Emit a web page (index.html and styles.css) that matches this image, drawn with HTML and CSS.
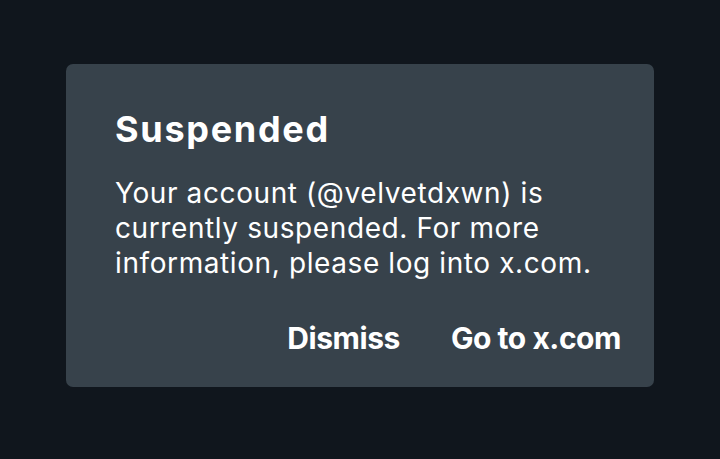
FILE: index.html
```html
<!DOCTYPE html>
<html>
<head>
<meta charset="utf-8">
<link rel="stylesheet" href="styles.css">
</head>
<body>
<div class="dialog">
  <h1 class="title">Suspended</h1>
  <p class="message">Your account (@velvetdxwn) is currently suspended. For more information, please log into x.com.</p>
  <div class="actions">
    <span class="action">Dismiss</span>
    <span class="action">Go to x.com</span>
  </div>
</div>
</body>
</html>
```
FILE: styles.css
```css
html, body {
  margin: 0;
  padding: 0;
  background: #10161d;
  width: 720px;
  height: 459px;
  overflow: hidden;
}
body {
  padding-top: 64px;
  box-sizing: border-box;
  font-family: Inter, "Noto Sans", sans-serif;
  color: #ffffff;
}
.dialog {
  margin-left: 66px;
  width: 588px;
  height: 323px;
  box-sizing: border-box;
  background: #37424b;
  border-radius: 7px;
  padding: 43px 33px 0 49px;
}
.title {
  margin: 0;
  font-size: 36px;
  font-weight: 700;
  line-height: 44px;
  letter-spacing: 1.7px;
}
.message {
  margin: 25px 0 0;
  font-size: 28px;
  font-weight: 400;
  line-height: 35px;
  width: 500px;
  letter-spacing: 0.6px;
}
.actions {
  display: flex;
  justify-content: flex-end;
  gap: 51px;
  margin-top: 39px;
}
.action {
  font-size: 30px;
  font-weight: 700;
  line-height: 36px;
  letter-spacing: -0.45px;
}
```
